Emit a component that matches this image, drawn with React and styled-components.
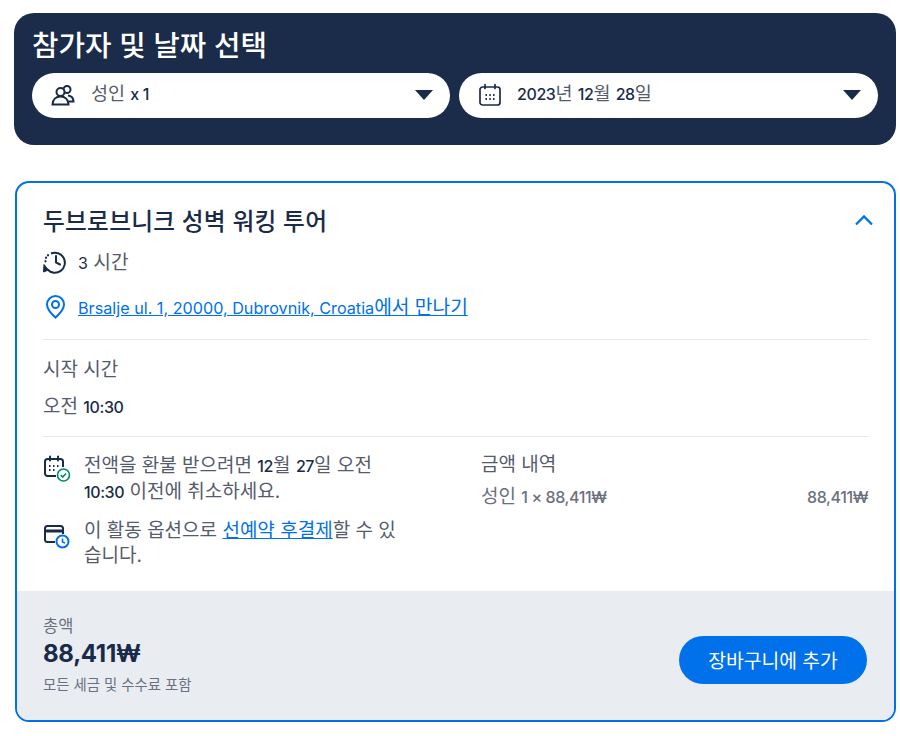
import React from 'react';
import styled, { createGlobalStyle } from 'styled-components';

const GlobalStyle = createGlobalStyle`
  * { box-sizing: border-box; }
  body {
    margin: 0;
    background: #fff;
    font-family: "Inter", "Noto Sans CJK KR", sans-serif;
    color: #1a2b49;
  }
`;

const Page = styled.div`
  width: 900px;
  height: 736px;
  padding: 13px 4px 0 14px;
  overflow: hidden;
`;

// latin and digits run smaller than the hangul around them
const Num = styled.span`
  font-size: ${p => p.$size || 16}px;
  font-weight: ${p => p.$weight || 500};
  letter-spacing: ${p => p.$spacing ?? -0.4}px;
  color: ${p => p.$color || '#1a2b49'};
`;

const Picker = styled.section`
  height: 132px;
  padding: 14px 18px 0;
  background: #1b2c4a;
  border-radius: 20px;
`;

const PickerTitle = styled.h2`
  margin: 0 0 9px;
  font-size: 28.800px;
  line-height: 37px;
  font-weight: 500;
  color: #fff;
`;

const PickerRow = styled.div`
  display: grid;
  grid-template-columns: 418px 419px;
  gap: 9px;
`;

const Pill = styled.div`
  display: flex;
  align-items: center;
  height: 45px;
  padding: 0 16px 0 19px;
  background: #fff;
  border-radius: 23px;
`;

const PillIcon = styled.span`
  display: flex;
  width: 24px;
  margin-top: -1px;
  margin-right: ${p => p.$gap}px;
`;

const PillText = styled.span`
  flex: 1;
  margin-top: -8px;
  font-size: 18.500px;
  color: #555b6c;
`;

const Caret = styled.span`
  width: 0;
  height: 0;
  margin-right: 1px;
  margin-top: -1px;
  border-left: 9.5px solid transparent;
  border-right: 9.5px solid transparent;
  border-top: 10px solid #1a2b49;
`;

const Card = styled.section`
  height: 541px;
  margin: 36px 0 0 1px;
  border: 2px solid #0071eb;
  border-radius: 14px;
  overflow: hidden;
  display: flex;
  flex-direction: column;
`;

const Body = styled.div`
  flex: 1;
  padding: 22px 26px 0;
`;

const TitleRow = styled.div`
  display: flex;
  justify-content: space-between;
  align-items: center;
  height: 34px;
`;

const Title = styled.h3`
  margin: 0;
  font-size: 23.700px;
  font-weight: 500;
  line-height: 34px;
  letter-spacing: 0.25px;
`;

const Chevron = styled.span`
  display: flex;
  margin-right: -8px;
  margin-top: -5px;
`;

const InfoRow = styled.div`
  display: flex;
  align-items: center;
  height: 26px;
  margin-top: ${p => p.$top}px;
  font-size: 19.200px;
  color: #555b6c;
`;

const InfoIcon = styled.span`
  display: flex;
  width: 35px;
  flex: none;
`;

const TextLink = styled.a`
  color: #0071eb;
  text-decoration: underline;
`;

const Rule = styled.hr`
  margin: ${p => p.$top}px 0 0;
  border: 0;
  border-top: 1px solid #e4e6ea;
`;

const Label = styled.div`
  margin-top: 18px;
  font-size: 19px;
  line-height: 24px;
  color: #555b6c;
`;

const TimeValue = styled.div`
  margin-top: 13px;
  font-size: 19px;
  line-height: 24px;
  color: #555b6c;
`;

const Columns = styled.div`
  display: grid;
  grid-template-columns: 438px 1fr;
  padding-top: 16px;
`;

const Policies = styled.div`
  display: flex;
  flex-direction: column;
  gap: 13px;
`;

const Policy = styled.div`
  display: flex;
  width: 362px;
  font-size: 19px;
  line-height: 25px;
  color: #555b6c;
`;

const PolicyIcon = styled.span`
  display: flex;
  flex: none;
  width: 41px;
  padding-top: ${p => p.$top}px;
`;

const Breakdown = styled.div`
  font-size: 19px;
  line-height: 24px;
  color: #555b6c;
`;

const BreakdownRow = styled.div`
  display: flex;
  justify-content: space-between;
  margin-top: 8px;
  color: #6b7080;
`;

const Footer = styled.div`
  height: 129px;
  display: flex;
  align-items: center;
  justify-content: space-between;
  padding: 0 27px 0 26px;
  background: #e9edf1;
`;

const Totals = styled.div`
  display: flex;
  flex-direction: column;
  margin-top: -1px;
`;

const TotalLabel = styled.span`
  font-size: 16.500px;
  line-height: 20px;
  color: #6b7080;
`;

const TotalValue = styled.span`
  font-size: 24px;
  line-height: 36px;
  font-weight: 700;
  letter-spacing: -0.3px;
  color: #1a2b49;
`;

const TotalNote = styled.span`
  margin-top: 4px;
  font-size: 14.400px;
  line-height: 18px;
  color: #6b7080;
`;

const CartButton = styled.button`
  width: 188px;
  height: 48px;
  margin-top: 8px;
  border: 0;
  border-radius: 24px;
  background: #0071eb;
  color: #fff;
  font: inherit;
  font-size: 19.300px;
`;

const PeopleIcon = () => (
  <svg width="24" height="24" viewBox="0 0 24 24" fill="none" stroke="#1a2b49" strokeWidth="2">
    <circle cx="16" cy="6.500" r="3.500" />
    <path d="M17 12.500c3 .3 5.300 2.300 5.500 6h-5" />
    <circle cx="9.500" cy="9" r="4" fill="#fff" />
    <path d="M1.500 21.500c0-5 3.500-8 8-8s8 3 8 8z" fill="#fff" />
  </svg>
);

const CalendarIcon = () => (
  <svg width="24" height="24" viewBox="0 0 24 24" fill="none" stroke="#1a2b49" strokeWidth="1.700">
    <rect x="2" y="4" width="20" height="18" rx="2.500" />
    <path d="M7 1.500v4M17 1.500v4" strokeLinecap="round" />
    <path d="M7.500 12h1.500M11.300 12h1.500M15 12h1.500M7.500 16h1.500M11.300 16h1.500M15 16h1.500" strokeWidth="1.800" />
  </svg>
);

const ChevronUp = () => (
  <svg width="24" height="24" viewBox="0 0 24 24" fill="none" stroke="#0071eb" strokeWidth="2.300">
    <path d="M4 16.500l8-8 8 8" />
  </svg>
);

const HistoryIcon = () => (
  <svg width="25" height="25" viewBox="0 0 25 25" fill="none" stroke="#1a2b49" strokeWidth="2">
    <path d="M8 4.500a10 10 0 1 1-3.500 16" />
    <path d="M13 7v6.500l4 2" strokeLinecap="round" />
    <path d="M1 15.500l4.500 5.500-5 2z" fill="#1a2b49" strokeWidth="1" />
    <path d="M2.500 12v.5M3 8.500v.5M5 6v.5" strokeLinecap="round" />
  </svg>
);

const PinIcon = () => (
  <svg width="25" height="25" viewBox="0 0 25 25" fill="none" stroke="#0071eb" strokeWidth="2">
    <path d="M12.500 23.500c-5-5-8.500-8.500-8.500-13a8.500 8.500 0 0 1 17 0c0 4.500-3.500 8-8.500 13z" />
    <circle cx="12.500" cy="10.500" r="3.500" />
  </svg>
);

const RefundIcon = () => (
  <svg width="28" height="28" viewBox="0 0 28 28" fill="none" stroke="#1a2b49" strokeWidth="2">
    <path d="M13 21H4.500A2.500 2.500 0 0 1 2 18.500v-12A2.500 2.500 0 0 1 4.500 4h13A2.500 2.500 0 0 1 20 6.500V12" />
    <path d="M7 1.500v4M15 1.500v4" strokeLinecap="round" />
    <path d="M6 11h1.500M10 11h1.500M14 11h1.500M6 15h1.500M10 15h1.500" />
    <circle cx="20.500" cy="20" r="6" stroke="#008768" strokeWidth="1.600" fill="#fff" />
    <path d="M17.700 20l2 2 3.300-3.500" stroke="#008768" strokeWidth="1.600" />
  </svg>
);

const ReserveIcon = () => (
  <svg width="28" height="28" viewBox="0 0 28 28" fill="none" stroke="#1a2b49" strokeWidth="2">
    <path d="M12 20H4.500A2.500 2.500 0 0 1 2 17.500v-11A2.500 2.500 0 0 1 4.500 4h13A2.500 2.500 0 0 1 20 6.500V12" />
    <path d="M2 9h18" strokeWidth="3" />
    <circle cx="19.500" cy="19.500" r="6" stroke="#0071eb" strokeWidth="2" fill="#fff" />
    <path d="M19.500 16.500v3.500l2.500 1" stroke="#0071eb" strokeWidth="1.600" />
  </svg>
);

export default function App() {
  return (
    <Page>
      <GlobalStyle />
      <Picker>
        <PickerTitle>참가자 및 날짜 선택</PickerTitle>
        <PickerRow>
          <Pill>
            <PillIcon $gap={16}><PeopleIcon /></PillIcon>
            <PillText>성인 <Num>x 1</Num></PillText>
            <Caret />
          </Pill>
          <Pill>
            <PillIcon $gap={15}><CalendarIcon /></PillIcon>
            <PillText><Num>2023</Num>년 <Num>12</Num>월 <Num>28</Num>일</PillText>
            <Caret />
          </Pill>
        </PickerRow>
      </Picker>
      <Card>
        <Body>
          <TitleRow>
            <Title>두브로브니크 성벽 워킹 투어</Title>
            <Chevron><ChevronUp /></Chevron>
          </TitleRow>
          <InfoRow $top={9}>
            <InfoIcon><HistoryIcon /></InfoIcon>
            <span><Num $weight={400} $color="#1a2b49" $spacing={0}>3</Num> 시간</span>
          </InfoRow>
          <InfoRow $top={19}>
            <InfoIcon><PinIcon /></InfoIcon>
            <TextLink><Num $weight={400} $color="#0071eb" $size={16.2} $spacing={0}>Brsalje ul. 1, 20000, Dubrovnik, Croatia</Num>에서 만나기</TextLink>
          </InfoRow>
          <Rule $top={20} />
          <Label>시작 시간</Label>
          <TimeValue>오전 <Num>10:30</Num></TimeValue>
          <Rule $top={17} />
          <Columns>
            <Policies>
              <Policy>
                <PolicyIcon $top={2}><RefundIcon /></PolicyIcon>
                <span>전액을 환불 받으려면 <Num>12</Num>월 <Num>27</Num>일 오전 <Num>10:30</Num> 이전에 취소하세요.</span>
              </Policy>
              <Policy>
                <PolicyIcon $top={4}><ReserveIcon /></PolicyIcon>
                <span>이 활동 옵션으로 <TextLink>선예약 후결제</TextLink>할 수 있습니다.</span>
              </Policy>
            </Policies>
            <Breakdown>
              금액 내역
              <BreakdownRow>
                <span>성인 <Num $color="#6b7080">1 × 88,411₩</Num></span>
                <Num $color="#6b7080">88,411₩</Num>
              </BreakdownRow>
            </Breakdown>
          </Columns>
        </Body>
        <Footer>
          <Totals>
            <TotalLabel>총액</TotalLabel>
            <TotalValue>88,411₩</TotalValue>
            <TotalNote>모든 세금 및 수수료 포함</TotalNote>
          </Totals>
          <CartButton>장바구니에 추가</CartButton>
        </Footer>
      </Card>
    </Page>
  );
}
